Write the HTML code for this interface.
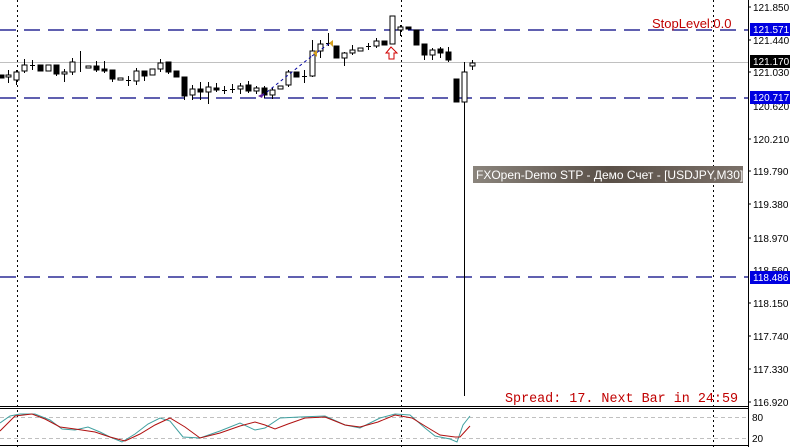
<!DOCTYPE html>
<html><head><meta charset="utf-8"><style>
html,body{margin:0;padding:0;background:#fff;width:793px;height:447px;overflow:hidden}
svg{display:block}
text{font-family:"Liberation Sans","DejaVu Sans",sans-serif}
</style></head><body>
<svg width="793" height="447" viewBox="0 0 793 447" xmlns="http://www.w3.org/2000/svg">
<defs><linearGradient id="g" x1="0" x2="1" y1="0" y2="0"><stop offset="0" stop-color="#8a847c"/><stop offset="0.5" stop-color="#5a5048"/><stop offset="1" stop-color="#7a7068"/></linearGradient></defs>
<rect width="793" height="447" fill="#fff"/>
<line x1="0" y1="62.5" x2="748" y2="62.5" stroke="#c0c0c0"/>
<g stroke="#000080" stroke-dasharray="16,8" stroke-width="1.3">
<line x1="0" y1="30" x2="748" y2="30"/>
<line x1="0" y1="98" x2="748" y2="98"/>
<line x1="0" y1="277" x2="748" y2="277"/>
</g>
<g stroke="#000" stroke-dasharray="2,3">
<line x1="17.5" y1="0" x2="17.5" y2="447"/>
<line x1="401.5" y1="0" x2="401.5" y2="447"/>
<line x1="713.5" y1="0" x2="713.5" y2="447"/>
</g>
<g stroke="#000" stroke-width="1" shape-rendering="crispEdges">
<line x1="8.5" y1="70" x2="8.5" y2="83"/><line x1="16.5" y1="70" x2="16.5" y2="85"/><line x1="24.5" y1="59" x2="24.5" y2="73"/><line x1="32.5" y1="60" x2="32.5" y2="70"/><line x1="56.5" y1="65" x2="56.5" y2="76"/><line x1="64.5" y1="69" x2="64.5" y2="82"/><line x1="72.5" y1="58" x2="72.5" y2="75"/><line x1="80.5" y1="51" x2="80.5" y2="72"/><line x1="96.5" y1="61" x2="96.5" y2="72"/><line x1="104.5" y1="61" x2="104.5" y2="73"/><line x1="112.5" y1="70" x2="112.5" y2="82"/><line x1="128.5" y1="76" x2="128.5" y2="86"/><line x1="136.5" y1="68" x2="136.5" y2="85"/><line x1="144.5" y1="71" x2="144.5" y2="81"/><line x1="160.5" y1="59" x2="160.5" y2="72"/><line x1="168.5" y1="62" x2="168.5" y2="74"/><line x1="184.5" y1="77" x2="184.5" y2="100"/><line x1="192.5" y1="85" x2="192.5" y2="100"/><line x1="200.5" y1="82" x2="200.5" y2="100"/><line x1="208.5" y1="82" x2="208.5" y2="104"/><line x1="216.5" y1="83" x2="216.5" y2="92"/><line x1="224.5" y1="86" x2="224.5" y2="94"/><line x1="232.5" y1="84" x2="232.5" y2="93"/><line x1="240.5" y1="83" x2="240.5" y2="94"/><line x1="248.5" y1="81" x2="248.5" y2="93"/><line x1="256.5" y1="86" x2="256.5" y2="94"/><line x1="264.5" y1="86" x2="264.5" y2="98"/><line x1="272.5" y1="88" x2="272.5" y2="99"/><line x1="288.5" y1="70" x2="288.5" y2="87"/><line x1="304.5" y1="70" x2="304.5" y2="83"/><line x1="312.5" y1="40" x2="312.5" y2="77"/><line x1="320.5" y1="40" x2="320.5" y2="58"/><line x1="328.5" y1="33" x2="328.5" y2="46"/><line x1="344.5" y1="52" x2="344.5" y2="66"/><line x1="352.5" y1="45" x2="352.5" y2="55"/><line x1="368.5" y1="43" x2="368.5" y2="50"/><line x1="376.5" y1="38" x2="376.5" y2="48"/><line x1="400.5" y1="25" x2="400.5" y2="36"/><line x1="424.5" y1="44" x2="424.5" y2="60"/><line x1="432.5" y1="48" x2="432.5" y2="60"/><line x1="440.5" y1="47" x2="440.5" y2="58"/><line x1="448.5" y1="47" x2="448.5" y2="62"/><line x1="464.5" y1="62" x2="464.5" y2="396"/><line x1="472.5" y1="60" x2="472.5" y2="70"/>
</g>
<g stroke="#000" fill="#000" shape-rendering="crispEdges">
<rect x="0" y="75" width="4" height="3"/><rect x="38" y="65" width="5" height="6"/><rect x="54" y="65" width="5" height="9"/><rect x="94" y="66" width="5" height="4"/><rect x="102" y="69" width="5" height="2"/><rect x="110" y="70" width="5" height="9"/><rect x="142" y="71" width="5" height="5"/><rect x="166" y="62" width="5" height="10"/><rect x="174" y="71" width="5" height="6"/><rect x="182" y="77" width="5" height="19"/><rect x="198" y="89" width="5" height="3"/><rect x="214" y="88" width="5" height="2"/><rect x="246" y="85" width="5" height="6"/><rect x="262" y="88" width="5" height="7"/><rect x="294" y="72" width="5" height="5"/><rect x="334" y="46" width="5" height="12"/><rect x="382" y="41" width="5" height="4"/><rect x="406" y="27" width="5" height="2"/><rect x="414" y="30" width="5" height="15"/><rect x="422" y="44" width="5" height="11"/><rect x="438" y="49" width="5" height="4"/><rect x="446" y="52" width="5" height="8"/><rect x="454" y="79" width="5" height="23"/>
</g>
<g stroke="#000" fill="#fff" shape-rendering="crispEdges">
<rect x="6" y="75" width="5" height="2"/><rect x="14" y="72" width="5" height="8"/><rect x="22" y="65" width="5" height="6"/><rect x="46" y="65" width="5" height="6"/><rect x="62" y="72" width="5" height="2"/><rect x="70" y="62" width="5" height="10"/><rect x="86" y="66" width="5" height="2"/><rect x="118" y="78" width="5" height="2"/><rect x="134" y="71" width="5" height="10"/><rect x="150" y="69" width="5" height="6"/><rect x="158" y="63" width="5" height="6"/><rect x="190" y="89" width="5" height="6"/><rect x="206" y="87" width="5" height="5"/><rect x="238" y="86" width="5" height="3"/><rect x="254" y="88" width="5" height="3"/><rect x="270" y="90" width="5" height="5"/><rect x="278" y="86" width="5" height="3"/><rect x="286" y="72" width="5" height="13"/><rect x="310" y="51" width="5" height="25"/><rect x="318" y="44" width="5" height="7"/><rect x="342" y="53" width="5" height="5"/><rect x="350" y="50" width="5" height="3"/><rect x="358" y="48" width="5" height="3"/><rect x="374" y="41" width="5" height="5"/><rect x="390" y="16" width="5" height="28"/><rect x="398" y="27" width="5" height="3"/><rect x="430" y="50" width="5" height="5"/><rect x="462" y="72" width="5" height="30"/><rect x="470" y="63" width="5" height="3"/>
</g>
<g stroke="#000" shape-rendering="crispEdges">
<line x1="30" y1="65.5" x2="35" y2="65.5"/><line x1="126" y1="80.5" x2="131" y2="80.5"/><line x1="222" y1="90.5" x2="227" y2="90.5"/><line x1="230" y1="89.5" x2="235" y2="89.5"/><line x1="302" y1="76.5" x2="307" y2="76.5"/><line x1="326" y1="43.5" x2="331" y2="43.5"/><line x1="366" y1="46.5" x2="371" y2="46.5"/>
</g>
<line x1="262" y1="96" x2="312" y2="56" stroke="#0000a0" stroke-dasharray="3,3"/>
<line x1="312" y1="56" x2="330" y2="43" stroke="#0000a0" stroke-dasharray="3,3"/>
<polygon points="313,53 317,50 317,57" fill="#d4a020"/>
<polygon points="329,43 333,40 333,47" fill="#d4a020"/>
<path d="M258,96 l6,-3 l-2,5 z" fill="#6020a0"/>
<path d="M391,47 l-5,6 h3 v6 h5 v-6 h3 z" fill="#fff" stroke="#d00000"/>
<text x="652" y="28" font-size="13" fill="#c00000">StopLevel:0.0</text>
<rect x="473" y="166" width="270" height="17" fill="url(#g)"/>
<text x="476" y="179" font-size="12" fill="#fff">FXOpen-Demo STP - Демо Счет - [USDJPY,M30]</text>
<text x="505" y="402" font-size="13.4" fill="#c00000" style="font-family:'Liberation Mono',monospace">Spread: 17. Next Bar in 24:59</text>
<line x1="748.5" y1="0" x2="748.5" y2="447" stroke="#000"/>
<line x1="0" y1="406.5" x2="748" y2="406.5" stroke="#000"/>
<line x1="0" y1="408.5" x2="748" y2="408.5" stroke="#000"/>
<line x1="0" y1="445.5" x2="748" y2="445.5" stroke="#000"/>
<line x1="0" y1="417.5" x2="748" y2="417.5" stroke="#c0c0c0" stroke-dasharray="4,3"/>
<line x1="0" y1="438.5" x2="748" y2="438.5" stroke="#c0c0c0" stroke-dasharray="4,3"/>
<polyline fill="none" stroke="#40a0a0" points="0,423 10,416 20,414 35,414 50,420 62,429 75,430 88,427 100,432 110,437 122,442 135,434 148,424 160,418 170,421 183,437 200,438 220,431 240,423 255,430 265,428 280,418 300,417 325,416 345,425 360,428 380,418 395,414 410,415 425,428 435,436 450,439 457,442 463,425 470,416"/>
<polyline fill="none" stroke="#b01010" points="0,431 15,416 32,414 45,419 60,427 75,429 95,432 110,437 125,441 140,434 155,425 170,418 185,427 200,438 220,433 240,426 255,422 265,425 275,429 288,424 305,418 325,417 345,425 360,427 378,422 395,415 412,418 425,426 440,435 455,437 460,437 470,426"/>
<g font-size="10" fill="#000">
<text x="753" y="11">121.850</text>
<text x="753" y="44">121.440</text>
<text x="753" y="76">121.030</text>
<text x="753" y="110">120.620</text>
<text x="753" y="143">120.210</text>
<text x="753" y="175">119.790</text>
<text x="753" y="208">119.380</text>
<text x="753" y="242">118.970</text>
<text x="753" y="274">118.560</text>
<text x="753" y="307">118.150</text>
<text x="753" y="340">117.740</text>
<text x="753" y="373">117.330</text>
<text x="753" y="406">116.920</text>
<text x="752" y="421">80</text>
<text x="752" y="442">20</text>
</g>
<rect x="750" y="23" width="40" height="13" fill="#0000e0"/>
<text x="753" y="33" font-size="10" fill="#fff">121.571</text>
<rect x="750" y="55" width="40" height="13" fill="#000"/>
<text x="753" y="65" font-size="10" fill="#fff">121.170</text>
<rect x="750" y="91" width="40" height="13" fill="#0000e0"/>
<text x="753" y="101" font-size="10" fill="#fff">120.717</text>
<rect x="750" y="271" width="40" height="13" fill="#0000e0"/>
<text x="753" y="281" font-size="10" fill="#fff">118.486</text>
<g stroke="#000"><line x1="748" y1="7" x2="751" y2="7"/><line x1="748" y1="40" x2="751" y2="40"/><line x1="748" y1="72" x2="751" y2="72"/><line x1="748" y1="139" x2="751" y2="139"/><line x1="748" y1="171" x2="751" y2="171"/><line x1="748" y1="204" x2="751" y2="204"/><line x1="748" y1="238" x2="751" y2="238"/><line x1="748" y1="303" x2="751" y2="303"/><line x1="748" y1="336" x2="751" y2="336"/><line x1="748" y1="369" x2="751" y2="369"/><line x1="748" y1="402" x2="751" y2="402"/></g>
</svg>
</body></html>
